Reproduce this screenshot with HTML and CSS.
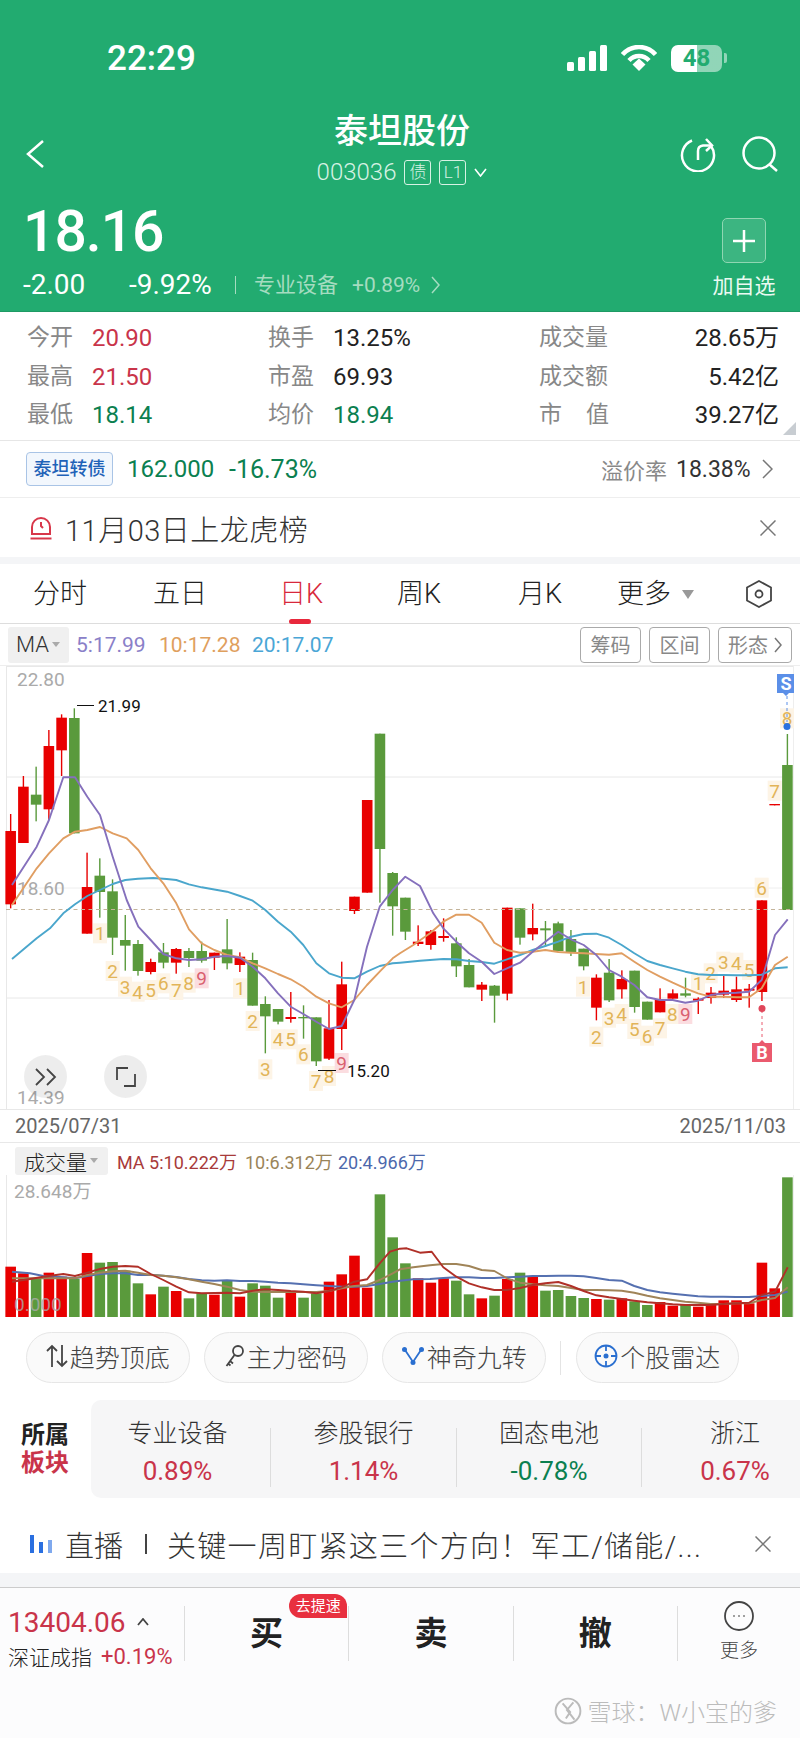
FILE: index.html
```html
<!DOCTYPE html>
<html lang="zh-CN">
<head>
    <meta charset="UTF-8">
    <meta name="viewport" content="width=device-width, initial-scale=1.0">
    <title>泰坦股份 003036</title>
    <link rel="stylesheet" href="styles.css">
</head>
<body>
    <div class="header">
        <div class="status">
            <span class="time">22:29</span>
            <div class="status-icons">
                <svg width="40" height="26" viewBox="0 0 40 26"><rect x="0" y="17" width="7" height="9" rx="1.5"/><rect x="11" y="12" width="7" height="14" rx="1.5"/><rect x="22" y="6" width="7" height="20" rx="1.5"/><rect x="33" y="0" width="7" height="26" rx="1.5"/></svg>
                <svg width="36" height="26" viewBox="0 0 36 26"><path d="M1.5 9.5C10.5 -0.5 25.5 -0.5 34.5 9.5" class="wifi"/><path d="M8 15.5C13.5 9.5 22.5 9.5 28 15.5" class="wifi"/><path d="M11.5 19.5L18 13.5L24.5 19.5L18 26Z"/></svg>
                <div class="battery"><span>48</span></div>
                <i class="battery-tip"></i>
            </div>
        </div>
        <div class="nav">
            <div class="nav-side">
                <svg width="18" height="28" viewBox="0 0 18 28" class="line-icon"><path d="M17 1L2 14L17 27"/></svg>
            </div>
            <div class="nav-title">
                <div class="stock-name">泰坦股份</div>
                <div class="stock-code">
                    <span>003036</span>
                    <span class="tag">债</span>
                    <span class="tag">L1</span>
                    <svg width="13" height="9" viewBox="0 0 13 9" class="line-icon thin"><path d="M1 1L6.5 8L12 1"/></svg>
                </div>
            </div>
            <div class="nav-side nav-right">
                <svg width="36" height="36" viewBox="0 0 36 36" class="line-icon"><path d="M12 4.5A16 16 0 1 0 31 10"/><path d="M18 24V15Q18 10 23 9.5H31"/><path d="M26 3L32 9.5L26 15"/></svg>
                <svg width="36" height="36" viewBox="0 0 36 36" class="line-icon"><circle cx="17" cy="17" r="15.5"/><path d="M27 28L35 35"/></svg>
            </div>
        </div>
        <div class="quote">
            <div>
                <div class="price">18.16</div>
                <div class="change">
                    <span class="change-abs">-2.00</span>
                    <span class="change-pct">-9.92%</span>
                    <i class="change-rule"></i>
                    <span class="change-sector">专业设备</span>
                    <span class="change-sector-pct">+0.89%</span>
                    <svg width="9" height="18" viewBox="0 0 9 18" class="line-icon soft"><path d="M1 1L8 9L1 17"/></svg>
                </div>
            </div>
            <div class="watch">
                <div class="watch-btn">
                    <svg width="22" height="22" viewBox="0 0 22 22" class="line-icon"><path d="M11 0V22M0 11H22"/></svg>
                </div>
                <div class="watch-label">加自选</div>
            </div>
        </div>
    </div>

    <div class="stats">
        <div class="stat"><span class="stat-key">今开</span><span class="up">20.90</span></div>
        <div class="stat"><span class="stat-key">换手</span><span>13.25%</span></div>
        <div class="stat stat-wide"><span class="stat-key">成交量</span><span>28.65万</span></div>
        <div class="stat"><span class="stat-key">最高</span><span class="up">21.50</span></div>
        <div class="stat"><span class="stat-key">市盈</span><span>69.93</span></div>
        <div class="stat stat-wide"><span class="stat-key">成交额</span><span>5.42亿</span></div>
        <div class="stat"><span class="stat-key">最低</span><span class="down">18.14</span></div>
        <div class="stat"><span class="stat-key">均价</span><span class="down">18.94</span></div>
        <div class="stat stat-wide"><span class="stat-key stat-spread"><b>市</b><b>值</b></span><span>39.27亿</span></div>
        <i class="stats-corner"></i>
    </div>

    <div class="bond">
        <span class="bond-tag">泰坦转债</span>
        <span class="bond-price down">162.000</span>
        <span class="bond-pct down">-16.73%</span>
        <span class="bond-key">溢价率</span>
        <span class="bond-rate">18.38%</span>
        <svg width="11" height="20" viewBox="0 0 11 20" class="line-icon gray"><path d="M1 1L10 10L1 19"/></svg>
    </div>

    <div class="notice">
        <svg width="22" height="24" viewBox="0 0 22 24" class="line-icon red"><path d="M2 18V11A9 9 0 0 1 20 11V18Z"/><path d="M0.5 22.5H21.5"/><path d="M11 6V10L13 12"/></svg>
        <span class="notice-text">11月03日上龙虎榜</span>
        <svg width="16" height="16" viewBox="0 0 16 16" class="line-icon gray close"><path d="M0.5 0.5L15.5 15.5M15.5 0.5L0.5 15.5"/></svg>
    </div>
    <div class="stripe"></div>

    <div class="tabs">
        <span class="tab tab-a">分时</span>
        <span class="tab tab-b">五日</span>
        <span class="tab tab-c active">日K</span>
        <span class="tab tab-d">周K</span>
        <span class="tab tab-e">月K</span>
        <span class="tab tab-f">更多<i class="caret"></i></span>
        <svg width="26" height="28" viewBox="0 0 26 28" class="line-icon dark"><path d="M13 1L25 7.5V20.5L13 27L1 20.5V7.5Z"/><circle cx="13" cy="14" r="3.5"/></svg>
    </div>

    <div class="ma-row">
        <span class="ma-btn">MA<i class="caret small"></i></span>
        <span class="ma5">5:17.99</span>
        <span class="ma10">10:17.28</span>
        <span class="ma20">20:17.07</span>
        <span class="ma-tools">
            <span class="ma-tool">筹码</span>
            <span class="ma-tool">区间</span>
            <span class="ma-tool ma-tool-wide">形态<svg width="8" height="16" viewBox="0 0 8 16" class="line-icon gray"><path d="M1 1L7 8L1 15"/></svg></span>
        </span>
    </div>

    <div class="kline-wrap">
        <svg id="kline" width="800" height="443" viewBox="0 6 800 443"></svg>
        <div class="kline-btn kline-btn-a">
            <svg width="24" height="18" viewBox="0 0 24 18" class="line-icon dark"><path d="M2 1L10 9L2 17M13 1L21 9L13 17"/></svg>
        </div>
        <div class="kline-btn kline-btn-b">
            <svg width="22" height="22" viewBox="0 0 22 22" class="line-icon dark"><path d="M13 2H2V14M9 20H20V8"/></svg>
        </div>
    </div>

    <div class="dates"><span>2025/07/31</span><span>2025/11/03</span></div>

    <div class="vol-head">
        <span class="vol-btn">成交量<i class="caret small"></i></span>
        <span class="vol5">MA 5:10.222万</span>
        <span class="vol10">10:6.312万</span>
        <span class="vol20">20:4.966万</span>
    </div>
    <svg id="volume" class="volume" width="800" height="145" viewBox="0 45 800 145"></svg>

    <div class="pills">
        <span class="pill">
            <svg width="22" height="24" viewBox="0 0 22 24" class="line-icon dark"><path d="M6 23V2M1 7L6 2L11 7M16 1V22M11 17L16 22L21 17"/></svg>趋势顶底
        </span>
        <span class="pill">
            <svg width="20" height="24" viewBox="0 0 20 24" class="line-icon dark"><circle cx="13" cy="7" r="5"/><path d="M9.5 11L1.5 22M5 17L8 19.5M3 19.5L5.5 21.5"/></svg>主力密码
        </span>
        <span class="pill">
            <svg width="24" height="20" viewBox="0 0 24 20" class="line-icon blue"><path d="M4 4L12 16L20 4"/><circle cx="3.5" cy="3.5" r="2.5" class="dot"/><circle cx="20.5" cy="3.5" r="2.5" class="dot"/><circle cx="12" cy="16.5" r="2.5" class="dot"/></svg>神奇九转
        </span>
        <i class="pill-rule"></i>
        <span class="pill">
            <svg width="24" height="24" viewBox="0 0 24 24" class="line-icon blue"><circle cx="12" cy="12" r="10.5"/><circle cx="12" cy="12" r="2.5" class="dot"/><path d="M12 1.5V7M12 17V22.5M1.5 12H7M17 12H22.5"/></svg>个股雷达
        </span>
    </div>

    <div class="sectors">
        <div class="sectors-label"><div>所属</div><div class="up">板块</div></div>
        <div class="sectors-card">
            <div class="sector"><div class="sector-name">专业设备</div><div class="sector-pct up">0.89%</div></div>
            <div class="sector"><div class="sector-name">参股银行</div><div class="sector-pct up">1.14%</div></div>
            <div class="sector"><div class="sector-name">固态电池</div><div class="sector-pct down">-0.78%</div></div>
            <div class="sector"><div class="sector-name">浙江</div><div class="sector-pct up">0.67%</div></div>
        </div>
    </div>

    <div class="live">
        <svg width="22" height="18" viewBox="0 0 22 18"><rect x="0" y="0" width="4" height="18" fill="#2a6fe0"/><rect x="9" y="7" width="4" height="11" fill="#2a6fe0"/><rect x="18" y="5" width="4" height="13" fill="#7fa9ee"/></svg>
        <span class="live-key">直播</span>
        <i class="live-rule"></i>
        <span class="live-text">关键一周盯紧这三个方向！军工/储能/...</span>
        <svg width="16" height="16" viewBox="0 0 16 16" class="line-icon gray close"><path d="M0.5 0.5L15.5 15.5M15.5 0.5L0.5 15.5"/></svg>
    </div>
    <div class="stripe stripe-wide"></div>

    <div class="footer">
        <div class="index">
            <div class="index-value">13404.06<svg width="12" height="8" viewBox="0 0 12 8" class="line-icon dark"><path d="M1 7L6 1L11 7"/></svg></div>
            <div class="index-name">深证成指<span>+0.19%</span></div>
        </div>
        <div class="trade">买<span class="speed">去提速</span></div>
        <div class="trade">卖</div>
        <div class="trade">撤</div>
        <div class="trade more">
            <svg width="30" height="30" viewBox="0 0 30 30" class="line-icon dark"><circle cx="15" cy="15" r="14"/><path d="M9.5 15H10.5M14.5 15H15.5M19.5 15H20.5"/></svg>
            <span>更多</span>
        </div>
        <div class="watermark">
            <svg width="28" height="28" viewBox="0 0 26 26" class="line-icon mark"><circle cx="13" cy="13" r="11.5"/><path d="M8 6L15 14L11 20M18 5L12 12L19 21"/></svg>
            <span>雪球：W小宝的爹</span>
        </div>
    </div>

    <script src="chart.js"></script>
</body>
</html>
```

FILE: styles.css
```css
* {
    box-sizing: border-box;
}
body {
    margin: 0;
    width: 800px;
    height: 1738px;
    overflow: hidden;
    background: #fff;
    color: #222;
    font-family: Roboto, "Noto Sans CJK SC", sans-serif;
}
i {
    display: block;
    font-style: normal;
}
.up {
    color: #c9344a;
}
.down {
    color: #0b8050;
}
.line-icon {
    flex: none;
    fill: none;
    stroke: #fff;
    stroke-width: 2.5;
}
.line-icon.thin {
    stroke-width: 1.6;
}
.line-icon.soft {
    stroke: #a5dcc0;
    stroke-width: 1.5;
}
.line-icon.gray {
    stroke: #777;
    stroke-width: 1.5;
}
.line-icon.red {
    stroke: #d8374a;
    stroke-width: 2;
}
.line-icon.dark {
    stroke: #444;
    stroke-width: 1.8;
}
.line-icon.blue {
    stroke: #2a6fd0;
    stroke-width: 1.8;
}
.line-icon .dot {
    fill: #2a6fd0;
    stroke: none;
}
.line-icon.mark {
    stroke: #bbb;
    stroke-width: 1.8;
}

/* green header */
.header {
    height: 312px;
    background: #22ab70;
    color: #fff;
    border-bottom: 1px solid #1e9a64;
}
.status {
    height: 116px;
    padding: 0 73px 0 107px;
    display: flex;
    align-items: center;
    justify-content: space-between;
}
.time {
    font-size: 35px;
    font-weight: 500;
}
.status-icons {
    display: flex;
    align-items: center;
    gap: 14px;
}
.status-icons svg {
    fill: #fff;
}
.status-icons .wifi {
    fill: none;
    stroke: #fff;
    stroke-width: 4.5;
}
.battery {
    width: 51px;
    height: 27px;
    border-radius: 7px;
    background: linear-gradient(to right, #fff 51%, rgba(255, 255, 255, .5) 51%);
    color: #22ab70;
    font-size: 24px;
    font-weight: 700;
    line-height: 27px;
    text-align: center;
}
.battery-tip {
    width: 3px;
    height: 10px;
    margin-left: -12px;
    border-radius: 0 2px 2px 0;
    background: rgba(255, 255, 255, .5);
}
.nav {
    height: 76px;
    padding: 0 22px 0 26px;
    display: flex;
    align-items: center;
    justify-content: space-between;
}
.nav-side {
    width: 110px;
    display: flex;
    align-items: center;
}
.nav-side.nav-right {
    justify-content: flex-end;
    gap: 26px;
}
.nav-title {
    align-self: flex-start;
    margin-top: -8px;
    text-align: center;
}
.stock-name {
    font-size: 34px;
    font-weight: 500;
    line-height: 46px;
}
.stock-code {
    height: 32px;
    margin-top: 2px;
    display: flex;
    align-items: center;
    justify-content: center;
    gap: 8px;
    font-size: 24px;
    font-weight: 300;
    color: #d7f2e4;
}
.tag {
    width: 27px;
    height: 25px;
    border: 1px solid #d7f2e4;
    border-radius: 3px;
    font-size: 17px;
    line-height: 23px;
    text-align: center;
}
.quote {
    height: 119px;
    padding: 13px 24px 0 23px;
    display: flex;
    justify-content: space-between;
}
.price {
    height: 54px;
    font-size: 57px;
    font-weight: 500;
    line-height: 54px;
    letter-spacing: -1px;
}
.change {
    height: 52px;
    display: flex;
    align-items: center;
    font-size: 28px;
    line-height: 52px;
}
.change-abs {
    width: 106px;
}
.change-pct {
    width: 106px;
}
.change-rule {
    width: 1px;
    height: 18px;
    margin-right: 18px;
    background: #a5dcc0;
}
.change-sector {
    width: 98px;
    font-size: 21px;
    color: #a5dcc0;
}
.change-sector-pct {
    width: 79px;
    font-size: 21px;
    color: #a5dcc0;
}
.watch {
    width: 64px;
    padding-top: 13px;
    display: flex;
    flex-direction: column;
    align-items: center;
}
.watch-btn {
    width: 44px;
    height: 45px;
    border: 1px solid #8fd6b2;
    border-radius: 5px;
    background: rgba(255, 255, 255, .12);
    display: flex;
    align-items: center;
    justify-content: center;
}
.watch-label {
    margin-top: 7px;
    font-size: 21px;
    line-height: 32px;
    white-space: nowrap;
    color: #eafaf2;
}

/* stats table */
.stats {
    position: relative;
    height: 129px;
    padding: 7px 21px 0 27px;
    display: grid;
    grid-template-columns: 241px 271px 1fr;
    grid-auto-rows: 38.5px;
    border-bottom: 1px solid #e6e6e6;
    font-size: 24px;
}
.stat {
    display: flex;
    align-items: center;
    line-height: 38px;
}
.stat-key {
    width: 65px;
    font-size: 23px;
    color: #888;
}
.stat-wide {
    justify-content: space-between;
}
.stat-wide .stat-key {
    width: 70px;
}
.stat-spread {
    display: flex;
    justify-content: space-between;
}
.stat-spread b {
    font-weight: 400;
}
.stats-corner {
    position: absolute;
    right: 4px;
    bottom: 5px;
    width: 0;
    height: 0;
    border-left: 13px solid transparent;
    border-bottom: 13px solid #c8cdd2;
}

/* convertible bond row */
.bond {
    height: 57px;
    padding: 0 27px 0 26px;
    display: flex;
    align-items: center;
    border-bottom: 1px solid #eee;
    font-size: 24px;
}
.bond-tag {
    width: 87px;
    height: 34px;
    margin-right: 14px;
    border: 1px solid #a9c4e6;
    border-radius: 4px;
    background: #f2f7fd;
    color: #1f62b8;
    font-size: 18px;
    font-weight: 500;
    line-height: 32px;
    text-align: center;
}
.bond-price {
    width: 102px;
}
.bond-pct {
    flex: 1;
    font-size: 25px;
}
.bond-key {
    width: 75px;
    font-size: 22px;
    color: #888;
}
.bond-rate {
    width: 86px;
    font-size: 23px;
    color: #333;
}

/* notice row */
.notice {
    height: 59px;
    padding: 0 24px 0 30px;
    display: flex;
    align-items: center;
}
.notice-text {
    flex: 1;
    margin-left: 13px;
    font-size: 29px;
    font-weight: 300;
    letter-spacing: .5px;
    color: #333;
}
.stripe {
    height: 7px;
    background: #f4f5f7;
}
.stripe-wide {
    height: 14px;
}

/* period tabs */
.tabs {
    position: relative;
    height: 60px;
    padding-right: 28px;
    display: flex;
    align-items: center;
    justify-content: flex-end;
    border-bottom: 1px solid #ddd;
}
.tab {
    position: absolute;
    top: 9px;
    font-size: 27px;
    font-weight: 300;
    line-height: 42px;
    display: flex;
    align-items: center;
}
.tab-a {
    left: 33px;
}
.tab-b {
    left: 153px;
}
.tab-c {
    left: 279px;
}
.tab-d {
    left: 397px;
}
.tab-e {
    left: 518px;
}
.tab-f {
    left: 617px;
}
.tab.active {
    color: #d8283c;
}
.tab.active::after {
    content: "";
    position: absolute;
    left: 10px;
    bottom: -9px;
    width: 22px;
    height: 5px;
    border-radius: 3px;
    background: #e8283c;
}
.caret {
    width: 0;
    height: 0;
    margin-left: 11px;
    border: 6px solid transparent;
    border-top: 9px solid #999;
    border-bottom: 0;
}
.caret.small {
    margin-left: 3px;
    border-width: 4px;
    border-top-width: 5px;
    border-bottom: 0;
    border-top-color: #aaa;
}

/* MA legend */
.ma-row {
    height: 42px;
    padding: 3px 8px 3px 8px;
    display: flex;
    align-items: center;
    font-size: 21px;
    border-bottom: 1px solid #eee;
}
.ma-btn {
    width: 61px;
    height: 36px;
    margin-right: 7px;
    padding-left: 8px;
    border-radius: 3px;
    background: #f0f0f0;
    color: #333;
    display: flex;
    align-items: center;
    font-size: 22px;
    font-weight: 300;
}
.ma5 {
    width: 83px;
    color: #8a80c8;
}
.ma10 {
    width: 93px;
    color: #dfa05e;
}
.ma20 {
    color: #4aa6d6;
}
.ma-tools {
    margin-left: auto;
    display: flex;
    gap: 8px;
}
.ma-tool {
    width: 61px;
    height: 36px;
    border: 1px solid #aaa;
    border-radius: 4px;
    color: #888;
    display: flex;
    align-items: center;
    justify-content: center;
    gap: 6px;
    font-size: 20px;
}
.ma-tool-wide {
    width: 74px;
}

/* candle chart */
.kline-wrap {
    position: relative;
    height: 443px;
}
#kline,
.volume {
    display: block;
}
svg text {
    font-family: Roboto, "Noto Sans CJK SC", sans-serif;
}
.axis {
    font-size: 19px;
    fill: #aaa;
}
.extreme {
    font-size: 17px;
    fill: #111;
}
.td {
    font-size: 19px;
    fill: #e2b458;
    text-anchor: middle;
}
.td-last {
    fill: #d9606f;
}
.marker {
    font-size: 18px;
    font-weight: 700;
    fill: #fff;
    text-anchor: middle;
}
.kline-btn {
    position: absolute;
    top: 389px;
    width: 43px;
    height: 43px;
    border-radius: 50%;
    background: rgba(0, 0, 0, .07);
    display: flex;
    align-items: center;
    justify-content: center;
}
.kline-btn-a {
    left: 24px;
}
.kline-btn-b {
    left: 104px;
}
.dates {
    height: 33px;
    padding: 0 14px 0 15px;
    display: flex;
    align-items: center;
    justify-content: space-between;
    border-top: 1px solid #e8e8e8;
    font-size: 20px;
    color: #666;
}

/* volume chart */
.vol-head {
    height: 33px;
    padding: 3px 0 0 15px;
    display: flex;
    align-items: center;
    border-top: 1px solid #e8e8e8;
    font-size: 18px;
}
.vol-btn {
    width: 93px;
    height: 28px;
    margin-right: 9px;
    padding-left: 9px;
    border-radius: 3px;
    background: #f0f0f0;
    color: #222;
    display: flex;
    align-items: center;
    font-size: 21px;
    font-weight: 300;
}
.vol5 {
    width: 128px;
    color: #a83a3a;
}
.vol10 {
    width: 93px;
    color: #9a8458;
}
.vol20 {
    color: #4c68ac;
}

/* feature pills */
.pills {
    height: 80px;
    padding: 12px 0 0 26px;
    display: flex;
    gap: 14.5px;
}
.pill {
    width: 163.5px;
    height: 51px;
    padding-bottom: 3px;
    border: 1px solid #e6e6e6;
    border-radius: 26px;
    background: #fafafa;
    color: #444;
    display: flex;
    align-items: center;
    justify-content: center;
    gap: 2px;
    font-size: 25px;
    font-weight: 300;
}
.pill-rule {
    width: 1px;
    height: 34px;
    margin: 9px 0 0;
    background: #e4e4e4;
}

/* sectors */
.sectors {
    height: 98px;
    display: flex;
    align-items: center;
}
.sectors-label {
    flex: none;
    width: 91px;
    padding-left: 21px;
    font-size: 24px;
    font-weight: 700;
    line-height: 28px;
}
.sectors-card {
    flex: none;
    width: 709px;
    height: 98px;
    padding: 28px 0 26px;
    border-radius: 10px 0 0 10px;
    background: #f6f6f7;
    display: grid;
    grid-template-columns: 180px 186px 185px 186px;
    overflow: hidden;
}
.sector {
    text-align: center;
    border-right: 1px solid #ddd;
}
.sector:first-child {
    padding-right: 6px;
}
.sector:last-child {
    border-right: 0;
}
.sector-name {
    margin-top: -9px;
    font-size: 25px;
    font-weight: 300;
    line-height: 30px;
    color: #333;
}
.sector-pct {
    margin-top: 6px;
    font-size: 26px;
    line-height: 32px;
}

/* live banner */
.live {
    height: 75px;
    padding: 17px 29px 0 30px;
    display: flex;
    align-items: center;
}
.live-key {
    margin-left: 13px;
    font-size: 29px;
    font-weight: 300;
    color: #333;
}
.live-rule {
    width: 2px;
    height: 20px;
    margin: 0 20px 0 22px;
    background: #444;
}
.live-text {
    flex: 1;
    font-size: 29px;
    font-weight: 300;
    letter-spacing: 1.3px;
    color: #333;
    white-space: nowrap;
}

/* bottom trade bar */
.footer {
    position: relative;
    height: 151px;
    padding-top: 18px;
    border-top: 1px solid #ccc;
    background: #fcfcfd;
    display: flex;
    align-items: flex-start;
}
.index {
    width: 184px;
    padding-left: 8px;
}
.index-value {
    height: 30px;
    margin-top: 1px;
    display: flex;
    align-items: center;
    gap: 11px;
    font-size: 28px;
    color: #c9344a;
}
.index-name {
    height: 30px;
    margin-top: 4px;
    display: flex;
    align-items: center;
    gap: 9px;
    font-size: 21px;
    font-weight: 300;
    white-space: nowrap;
}
.index-name span {
    color: #c9344a;
    font-size: 22px;
    font-weight: 400;
}
.trade {
    position: relative;
    width: 164.5px;
    height: 55px;
    padding-bottom: 6px;
    border-left: 1px solid #ddd;
    display: flex;
    align-items: center;
    justify-content: center;
    font-size: 33px;
    font-weight: 700;
    color: #222;
}
.speed {
    position: absolute;
    top: -12px;
    right: 1px;
    width: 58px;
    height: 24px;
    border-radius: 12px 12px 0 12px;
    background: #e8303f;
    color: #fff;
    font-size: 15px;
    font-weight: 400;
    line-height: 24px;
    text-align: center;
}
.more {
    width: 123px;
    padding-bottom: 0;
    flex-direction: column;
    justify-content: flex-start;
    font-size: 19px;
    font-weight: 300;
    color: #444;
}
.more svg {
    margin-top: -5px;
}
.more span {
    margin-top: 6px;
    line-height: 28px;
}
.watermark {
    position: absolute;
    right: 23px;
    bottom: 10px;
    display: flex;
    align-items: center;
    gap: 5px;
    font-size: 24px;
    font-weight: 300;
    color: #bcbcbc;
    white-space: nowrap;
}
```

FILE: chart.js
```js
// all coordinates below were read off at 3x, so they get divided by 3 when drawn
const STEP = 38.2;
const FIRST = 32;
const RED = "#e80000";
const GREEN = "#5a9a3c";
const NS = "http://www.w3.org/2000/svg";

// [body top, body bottom, wick top, wick bottom, colour]
const candles = [
    [513, 733, 462, 745, "r"], [380, 549, 348, 549, "r"], [404, 434, 320, 484, "g"], [258, 448, 210, 480, "r"],
    [173, 271, 163, 348, "r"], [174, 520, 145, 520, "g"], [681, 821, 578, 821, "r"], [647, 696, 595, 773, "g"],
    [694, 833, 658, 885, "g"], [840, 857, 765, 932, "g"], [852, 933, 840, 947, "g"], [906, 936, 896, 943, "r"],
    [877, 908, 849, 925, "g"], [867, 908, 864, 941, "r"], [873, 894, 864, 921, "g"], [873, 902, 845, 908, "g"],
    [878, 893, 878, 930, "r"], [868, 910, 777, 928, "g"], [890, 915, 877, 936, "r"], [900, 1037, 878, 1037, "g"],
    [1032, 1069, 1009, 1180, "g"], [1047, 1085, 1047, 1093, "g"], [1071, 1077, 996, 1088, "r"], [1071, 1075, 1036, 1136, "g"],
    [1072, 1204, 1072, 1218, "g"], [1105, 1196, 1020, 1200, "r"], [973, 1107, 905, 1170, "r"], [710, 753, 710, 762, "r"],
    [420, 698, 420, 698, "r"], [221, 567, 221, 728, "g"], [639, 739, 636, 827, "g"], [713, 815, 713, 840, "g"],
    [845, 852, 796, 858, "r"], [814, 855, 810, 869, "r"], [828, 834, 775, 845, "r"], [850, 919, 832, 951, "g"],
    [915, 982, 897, 982, "g"], [974, 989, 966, 1023, "r"], [977, 1007, 975, 1088, "g"], [743, 1001, 743, 1021, "r"],
    [745, 833, 745, 854, "g"], [804, 823, 731, 841, "r"], [805, 811, 783, 860, "g"], [790, 873, 785, 873, "g"],
    [837, 877, 810, 888, "g"], [866, 919, 866, 931, "g"], [953, 1043, 943, 1081, "r"], [938, 1021, 897, 1026, "g"],
    [957, 988, 931, 1016, "r"], [932, 1041, 932, 1058, "g"], [1025, 1079, 1025, 1079, "g"], [1017, 1057, 985, 1057, "r"],
    [1000, 1016, 988, 1016, "r"], [1000, 1007, 953, 1012, "g"], [1016, 1022, 1012, 1062, "r"], [998, 1014, 981, 1031, "r"],
    [992, 1004, 948, 1014, "r"], [988, 1020, 950, 1026, "r"], [986, 992, 972, 1043, "r"], [721, 996, 721, 1023, "r"],
    [432, 436, 432, 436, "r"], [315, 750, 222, 750, "g"]
];

const ma5 = [36,675,110,560,147,480,190,352,225,352,262,410,300,465,338,590,380,720,415,800,452,840,490,882,529,895,567,900,605,898,643,890,681,888,720,893,758,920,796,955,834,1000,872,1040,910,1062,949,1085,987,1107,1025,1098,1063,1020,1101,860,1139,740,1178,690,1216,650,1260,678,1300,760,1330,805,1369,845,1407,880,1445,905,1483,942,1521,925,1560,908,1598,875,1636,845,1675,815,1713,838,1751,855,1789,885,1827,930,1865,950,1903,975,1942,1012,1980,1020,2018,1020,2056,1028,2094,1022,2132,1005,2170,1000,2209,998,2247,995,2285,960,2325,825,2363,778];
const ma10 = [36,735,110,625,147,580,190,535,225,515,262,510,300,501,338,520,380,535,415,570,452,625,490,670,529,730,567,808,605,850,643,870,681,885,720,892,758,910,796,925,834,942,872,958,910,980,949,1010,987,1030,1025,1042,1063,1020,1101,975,1139,935,1178,895,1200,880,1240,855,1290,820,1330,785,1369,764,1407,764,1445,788,1483,848,1521,870,1560,878,1598,875,1636,870,1675,876,1713,878,1751,880,1789,882,1827,884,1865,880,1903,905,1942,930,1980,950,2018,968,2056,985,2094,1000,2132,1010,2170,1010,2209,1012,2247,1012,2285,985,2325,915,2363,890];
const ma20 = [36,897,110,835,150,805,190,760,225,733,262,708,300,690,338,672,376,660,414,656,460,654,500,657,529,660,567,673,605,682,681,695,720,708,758,722,796,750,834,785,872,815,910,855,949,910,987,940,1025,953,1063,955,1101,935,1139,918,1178,910,1200,908,1260,902,1330,897,1369,898,1407,903,1445,906,1483,911,1521,898,1560,885,1598,870,1636,858,1675,845,1713,830,1751,822,1789,821,1827,833,1865,855,1903,880,1942,903,1980,915,2018,925,2056,935,2094,943,2132,945,2170,945,2209,946,2247,946,2285,944,2325,925,2363,922];

// [digit, x, y] of the nine-turn count, the 9s get a pink box
const counts = [
    [1,300,820],[2,338,933],[3,375,980],[4,413,995],[5,452,990],[6,490,970],[7,529,990],[8,566,968],[9,605,955],
    [1,720,985],[2,758,1083],[3,796,1228],[4,834,1138],[5,872,1138],[6,910,1183],[7,948,1263],[8,987,1248],[9,1025,1209],
    [1,1749,980],[2,1789,1130],[3,1827,1073],[4,1865,1062],[5,1903,1107],[6,1941,1127],[7,1980,1105],[8,2017,1062],[9,2056,1062],
    [1,2094,968],[2,2132,940],[3,2170,905],[4,2209,908],[5,2247,930],[6,2285,683],[7,2324,392],[8,2361,175]
];

const volumes = [
    [410,"r"],[430,"r"],[445,"g"],[428,"r"],[440,"r"],[447,"g"],[369,"r"],[398,"g"],[396,"g"],[422,"g"],[460,"g"],
    [493,"r"],[470,"g"],[483,"r"],[505,"g"],[490,"g"],[494,"r"],[452,"g"],[500,"r"],[460,"g"],[467,"g"],[503,"g"],
    [487,"r"],[503,"g"],[490,"g"],[455,"r"],[433,"r"],[377,"r"],[473,"r"],[193,"g"],[322,"g"],[400,"g"],[445,"r"],
    [458,"r"],[445,"r"],[452,"g"],[493,"g"],[505,"r"],[497,"g"],[447,"r"],[428,"g"],[441,"r"],[482,"g"],[480,"g"],
    [498,"g"],[504,"g"],[507,"r"],[509,"g"],[505,"r"],[514,"g"],[525,"g"],[516,"r"],[527,"r"],[525,"g"],[530,"r"],
    [522,"r"],[511,"r"],[511,"r"],[520,"r"],[398,"r"],[475,"r"],[142,"g"]
];

const vol5 = [36,455,90,447,130,440,190,432,225,438,262,428,300,417,338,410,376,408,414,410,452,432,490,450,529,470,567,487,605,490,643,489,681,488,720,490,758,482,796,478,834,480,872,483,910,485,949,490,987,483,1025,472,1063,455,1101,448,1139,400,1170,365,1200,356,1220,355,1260,368,1295,365,1330,412,1369,440,1407,460,1445,472,1483,480,1521,480,1560,474,1598,465,1636,460,1675,456,1713,468,1751,483,1789,496,1827,502,1865,507,1903,512,1942,517,1980,520,2018,523,2056,525,2094,525,2132,525,2170,522,2209,520,2247,518,2285,495,2325,485,2363,412];
const vol10 = [36,445,110,445,190,445,225,445,262,435,300,428,338,424,376,422,414,428,452,435,490,437,529,442,567,448,605,455,643,462,681,470,720,480,758,485,796,486,834,485,872,486,910,486,949,486,987,483,1025,475,1063,468,1101,465,1139,450,1178,430,1200,418,1240,412,1290,406,1330,402,1369,402,1407,408,1445,420,1483,423,1521,445,1560,458,1598,463,1636,466,1675,468,1713,474,1751,480,1789,480,1827,481,1865,482,1903,488,1942,497,1980,505,2018,510,2056,515,2094,518,2132,522,2170,522,2209,520,2247,520,2285,510,2325,504,2363,472];
const vol20 = [36,425,90,430,130,438,190,442,225,445,262,438,300,432,338,430,376,430,414,435,452,434,490,437,529,441,567,447,605,451,643,452,681,451,720,453,758,453,796,455,834,458,872,460,910,463,949,466,987,468,1025,470,1063,470,1101,468,1139,462,1178,455,1200,452,1240,448,1290,447,1330,444,1369,442,1407,442,1445,444,1483,444,1521,442,1560,440,1598,438,1636,438,1675,437,1713,437,1751,439,1789,444,1827,450,1865,452,1903,468,1942,480,1980,487,2018,491,2056,495,2094,499,2132,500,2170,500,2209,501,2247,501,2285,498,2325,495,2363,485];

function add(parent, tag, attrs, text) {
    const node = document.createElementNS(NS, tag);
    for (const key in attrs) node.setAttribute(key, attrs[key]);
    if (text !== undefined) node.textContent = text;
    parent.appendChild(node);
    return node;
}

function rule(svg, x1, y1, x2, y2, color) {
    return add(svg, "line", { x1, y1, x2, y2, stroke: color, "stroke-width": 1 });
}

function curve(svg, values, color) {
    let points = "";
    for (let i = 0; i < values.length; i += 2) {
        points += (values[i] / 3).toFixed(1) + "," + (values[i + 1] / 3).toFixed(1) + " ";
    }
    add(svg, "polyline", { points, fill: "none", stroke: color, "stroke-width": 1.9, "stroke-linejoin": "round" });
}

function drawKline() {
    const svg = document.getElementById("kline");

    rule(svg, 6, 6.5, 793, 6.5, "#e8e8e8");
    rule(svg, 6, 117, 793, 117, "#e8e8e8");
    rule(svg, 6, 228, 793, 228, "#eee");
    rule(svg, 6, 338, 793, 338, "#e8e8e8");
    rule(svg, 6.5, 6, 6.5, 449, "#e8e8e8");
    rule(svg, 793.5, 6, 793.5, 449, "#eee");

    add(svg, "text", { x: 17, y: 26, class: "axis" }, "22.80");
    add(svg, "text", { x: 17, y: 235, class: "axis" }, "18.60");
    add(svg, "text", { x: 17, y: 444, class: "axis" }, "14.39");

    counts.forEach(([digit, x, y]) => {
        const fill = digit === 9 ? "#fbdde0" : "#fdf4e6";
        add(svg, "rect", { x: x / 3 - 7, y: y / 3 - 10, width: 14, height: 20, fill });
    });

    candles.forEach(([top, bottom, wickTop, wickBottom, tone], i) => {
        const x = (FIRST + STEP * i) / 3;
        const color = tone === "r" ? RED : GREEN;
        add(svg, "rect", { x: x - 0.7, y: wickTop / 3, width: 1.4, height: (wickBottom - wickTop) / 3, fill: color });
        add(svg, "rect", { x: x - 5.3, y: top / 3, width: 10.6, height: (bottom - top) / 3, fill: color });
    });

    rule(svg, 6, 249.5, 793, 249.5, "#c4b49a").setAttribute("stroke-dasharray", "4 3.5");

    counts.forEach(([digit, x, y]) => {
        add(svg, "text", { x: x / 3, y: y / 3 + 7, class: digit === 9 ? "td td-last" : "td" }, digit);
    });

    curve(svg, ma20, "#4aa6cc");
    curve(svg, ma10, "#e09e62");
    curve(svg, ma5, "#8570bc");

    rule(svg, 77, 45.5, 94, 45.5, "#111");
    add(svg, "text", { x: 98, y: 51.5, class: "extreme" }, "21.99");
    rule(svg, 318, 410.5, 336, 410.5, "#111");
    add(svg, "text", { x: 347, y: 416.5, class: "extreme" }, "15.20");

    // sell flag on the last candle
    rule(svg, 787, 36, 787, 62, "#5b8fe8").setAttribute("stroke-dasharray", "3 3");
    add(svg, "circle", { cx: 787, cy: 66.5, r: 3.5, fill: "#2a72e0" });
    add(svg, "path", { d: "M777 14H794V33H789L786 36L783 33H777Z", fill: "#5b8fe8" });
    add(svg, "text", { x: 786, y: 30, class: "marker" }, "S");

    // buy flag
    rule(svg, 762, 350, 762, 380, "#ea5a6e").setAttribute("stroke-dasharray", "3 3");
    add(svg, "circle", { cx: 762, cy: 348.5, r: 3.5, fill: "#e0465a" });
    add(svg, "path", { d: "M752 383H759L762 380L765 383H772V402H752Z", fill: "#ea5a6e" });
    add(svg, "text", { x: 762, y: 399, class: "marker" }, "B");
}

function drawVolume() {
    const svg = document.getElementById("volume");

    rule(svg, 6.5, 45, 6.5, 187, "#e8e8e8");
    rule(svg, 793.5, 45, 793.5, 187, "#eee");

    volumes.forEach(([top, tone], i) => {
        const x = (FIRST + STEP * i) / 3;
        add(svg, "rect", { x: x - 5.3, y: top / 3, width: 10.6, height: 187 - top / 3, fill: tone === "r" ? RED : GREEN });
    });

    curve(svg, vol20, "#5570b0");
    curve(svg, vol10, "#a08458");
    curve(svg, vol5, "#b03028");

    add(svg, "text", { x: 14, y: 68, class: "axis" }, "28.648万");
    add(svg, "text", { x: 14, y: 181, class: "axis", opacity: 0.8 }, "0.000");
}

drawKline();
drawVolume();
```
